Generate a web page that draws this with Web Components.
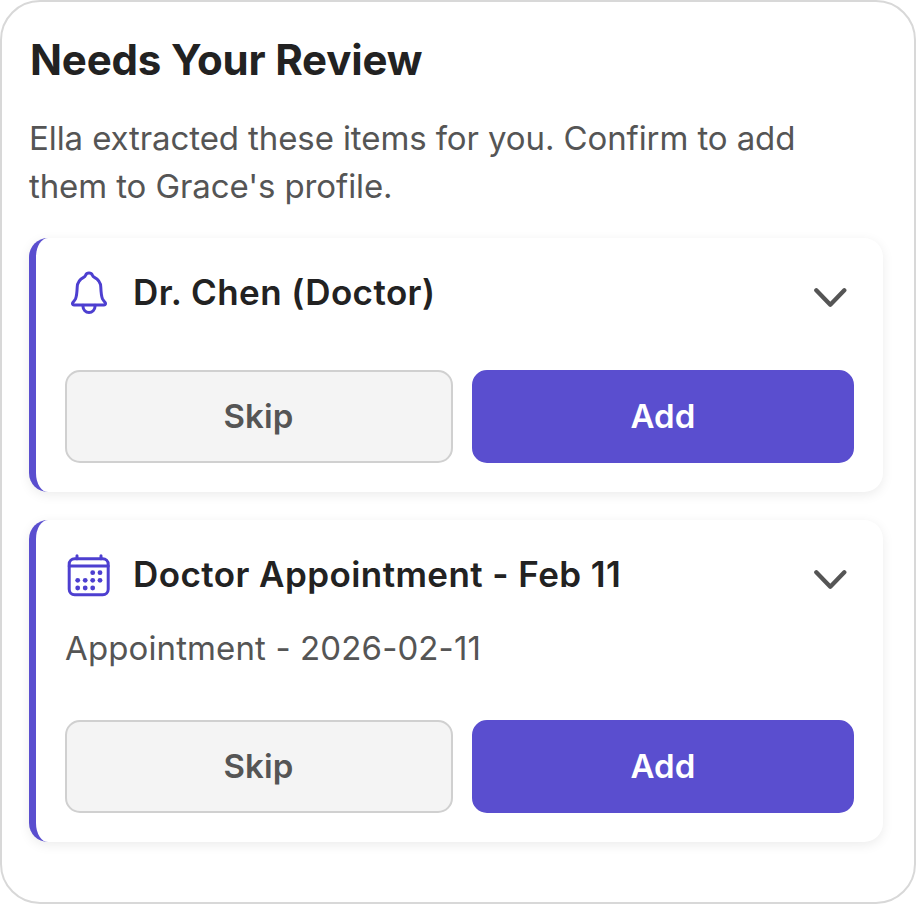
<!DOCTYPE html>
<html lang="en">
<head>
<meta charset="utf-8">
<title>Needs Your Review</title>
<style>
  body {
    margin: 0;
    background: #fff;
    font-family: Inter, "Liberation Sans", sans-serif;
    color: #222;
  }
</style>
</head>
<body>
<review-panel>
  <span slot="title">Needs Your Review</span>
  <span slot="intro">Ella extracted these items for you. Confirm to add them to Grace's profile.</span>
  <review-card icon="bell">
    <span slot="title">Dr. Chen (Doctor)</span>
  </review-card>
  <review-card icon="calendar">
    <span slot="title">Doctor Appointment - Feb 11</span>
    <span slot="detail">Appointment - 2026-02-11</span>
  </review-card>
</review-panel>

<script>
const ICONS = {
  bell: `
    <path d="M22 2c-1.700 0-2.900.9-3.400 2.200-.4 1.100-1 1.700-2 2.200-4 2-6.200 5.300-6.400 9.800-.2 5-.6 9-1.700 11.700-.7 1.400-1.700 2.600-2.600 3.600-.9 1.200-.4 2.400 1 2.400h30.200c1.400 0 1.900-1.200 1-2.400-.9-1-1.900-2.200-2.600-3.600-1.100-2.700-1.500-6.700-1.700-11.700-.2-4.500-2.400-7.800-6.400-9.800-1-.5-1.600-1.100-2-2.200-.5-1.300-1.700-2.200-3.400-2.200z"/>
    <path d="M16 34.200v1.300a6 6 0 0 0 12 0v-1.300"/>`,
  calendar: `
    <rect x="2.200" y="5.700" width="39" height="36" rx="5.500"/>
    <path d="M2.200 13h39M10 2.700v3M34 2.700v3"/>
    <g fill="currentColor" stroke="none">
      <circle cx="25.700" cy="19.700" r="2.400"/><circle cx="33" cy="19.700" r="2.400"/>
      <circle cx="10.700" cy="27.300" r="2.400"/><circle cx="18.200" cy="27.300" r="2.400"/>
      <circle cx="25.700" cy="27.300" r="2.400"/><circle cx="33" cy="27.300" r="2.400"/>
      <circle cx="10.700" cy="35" r="2.400"/><circle cx="18.200" cy="35" r="2.400"/>
      <circle cx="25.700" cy="35" r="2.400"/>
    </g>`
};

class ReviewIcon extends HTMLElement {
  constructor() {
    super();
    this.attachShadow({ mode: "open" });
  }

  connectedCallback() {
    this.shadowRoot.innerHTML = `
    <style>
      :host { display: block; width: 44px; height: 44px; color: #4d3fd0; }
      svg { display: block; }
    </style>
    <svg width="44" height="44" viewBox="0 0 44 44" fill="none" stroke="currentColor"
      stroke-width="3" stroke-linecap="round" stroke-linejoin="round">${ICONS[this.getAttribute("name")] || ""}</svg>`;
  }
}

class ReviewButton extends HTMLElement {
  constructor() {
    super();
    this.attachShadow({ mode: "open" }).innerHTML = `
    <style>
      :host { display: block; height: 93px; }
      button {
        box-sizing: border-box;
        width: 100%;
        height: 100%;
        padding: 0 1px 0 0;
        border: 2px solid #d0d0d0;
        border-radius: 15px;
        background: #f4f4f4;
        color: #555;
        font: 600 33px/1 Inter, "Liberation Sans", sans-serif;
        letter-spacing: 0.1px;
      }
      :host([primary]) button {
        padding: 0;
        border-color: #5a4ecf;
        background: #5a4ecf;
        color: #fff;
      }
    </style>
    <button type="button"><slot></slot></button>`;
  }
}

class ReviewCard extends HTMLElement {
  constructor() {
    super();
    this.attachShadow({ mode: "open" });
  }

  connectedCallback() {
    const detail = this.querySelector("[slot=detail]")
      ? `<div class="detail"><slot name="detail"></slot></div>` : "";
    this.shadowRoot.innerHTML = `
    <style>
      :host {
        display: block;
        box-sizing: border-box;
        padding: 29px;
        border-left: 7px solid #5a4ecf;
        border-radius: 19px;
        background: #fff;
        box-shadow: 0 3px 12px rgba(0, 0, 0, .08);
      }
      header { display: flex; align-items: center; height: 52px; }
      review-icon { margin-left: 2px; }
      h2 {
        flex: 1;
        margin: 0 0 1px 22px;
        font-size: 35px;
        font-weight: 600;
        line-height: 49px;
        letter-spacing: 0.43px;
        white-space: nowrap;
      }
      .chevron { display: block; margin: 10px 7px 0 0; }
      .detail {
        margin-top: 22px;
        color: #555;
        font-size: 33px;
        line-height: 51px;
        letter-spacing: 0.12px;
      }
      .actions {
        display: grid;
        grid-template-columns: 388px 382px;
        justify-content: space-between;
        margin-top: 51px;
      }
      .detail + .actions { margin-top: 46px; }
    </style>
    <header>
      <review-icon name="${this.getAttribute("icon")}"></review-icon>
      <h2><slot name="title"></slot></h2>
      <svg class="chevron" width="34" height="22" viewBox="0 0 34 22" fill="none" stroke="#555"
        stroke-width="4.300" stroke-linecap="round" stroke-linejoin="round"><path d="M3.300 3.200l14 14.500 14-14.500"/></svg>
    </header>
    ${detail}
    <div class="actions">
      <review-button>Skip</review-button>
      <review-button primary>Add</review-button>
    </div>`;
  }
}

class ReviewPanel extends HTMLElement {
  constructor() {
    super();
    this.attachShadow({ mode: "open" }).innerHTML = `
    <style>
      :host {
        display: block;
        box-sizing: border-box;
        width: 916px;
        height: 904px;
        padding: 32px 31px 0 27px;
        border: 2px solid #d8d8d8;
        border-radius: 40px;
        background: #fff;
      }
      h1 {
        margin: 0 0 0 1px;
        font-size: 42px;
        font-weight: 700;
        line-height: 52px;
        letter-spacing: -0.17px;
      }
      p {
        margin: 28px 0;
        max-width: 800px;
        color: #555;
        font-size: 33px;
        line-height: 48px;
        letter-spacing: -0.1px;
      }
      .cards { display: flex; flex-direction: column; gap: 28px; }
    </style>
    <h1><slot name="title"></slot></h1>
    <p><slot name="intro"></slot></p>
    <div class="cards"><slot></slot></div>`;
  }
}

customElements.define("review-icon", ReviewIcon);
customElements.define("review-button", ReviewButton);
customElements.define("review-card", ReviewCard);
customElements.define("review-panel", ReviewPanel);
</script>
</body>
</html>
